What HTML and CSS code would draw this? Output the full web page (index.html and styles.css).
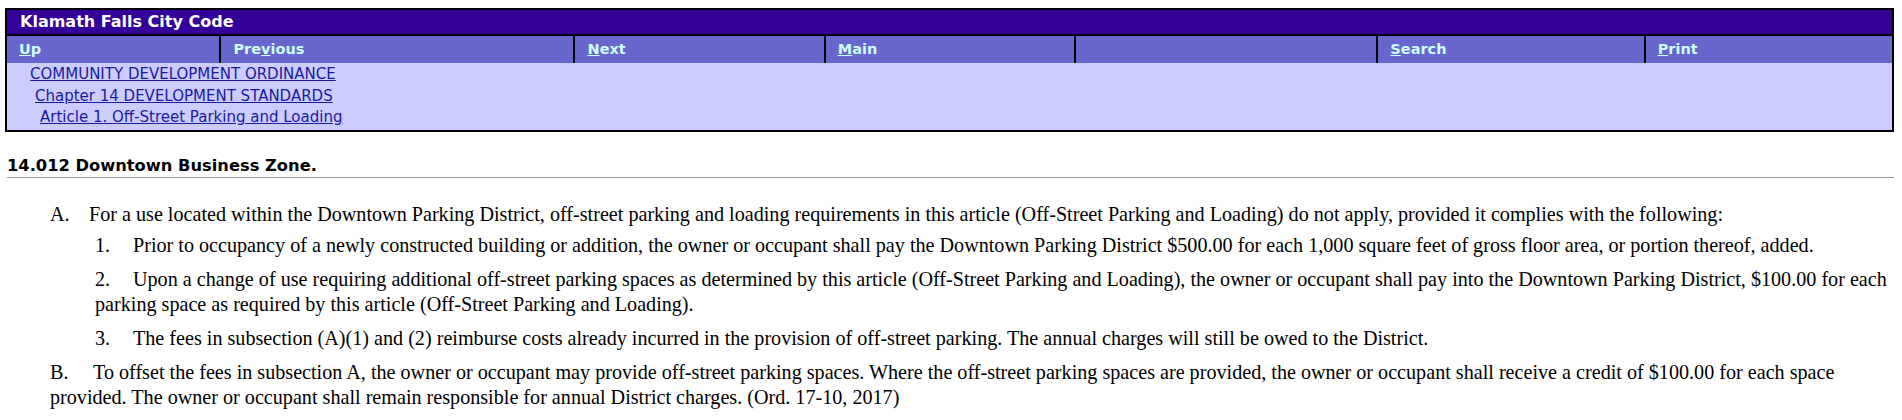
FILE: index.html
```html
<!DOCTYPE html>
<html lang="en">
<head>
<meta charset="utf-8">
<title>Klamath Falls City Code</title>
<link rel="stylesheet" href="styles.css">
</head>
<body>
<div class="page">
  <div class="codebox">
    <div class="title">Klamath Falls City Code</div>
    <div class="navrow">
      <div class="cell"><a href="#"><u>U</u>p</a></div>
      <div class="cell"><a href="#">Pre<u>v</u>ious</a></div>
      <div class="cell"><a href="#"><u>N</u>ext</a></div>
      <div class="cell"><a href="#"><u>M</u>ain</a></div>
      <div class="cell"></div>
      <div class="cell"><a href="#"><u>S</u>earch</a></div>
      <div class="cell"><a href="#"><u>P</u>rint</a></div>
    </div>
    <div class="crumbs">
      <a href="#" class="crumb c1">COMMUNITY DEVELOPMENT ORDINANCE</a>
      <a href="#" class="crumb c2">Chapter 14 DEVELOPMENT STANDARDS</a>
      <a href="#" class="crumb c3">Article 1. Off-Street Parking and Loading</a>
    </div>
  </div>

  <h1 class="sect">14.012 Downtown Business Zone.</h1>

  <div class="content">
    <p class="item top first"><span class="lbl">A.</span>For a use located within the Downtown Parking District, off-street parking and loading requirements in this article (Off-Street Parking and Loading) do not apply, provided it complies with the following:</p>
    <p class="item sub"><span class="lbl">1.</span>Prior to occupancy of a newly constructed building or addition, the owner or occupant shall pay the Downtown Parking District $500.00 for each 1,000 square feet of gross floor area, or portion thereof, added.</p>
    <p class="item sub"><span class="lbl">2.</span>Upon a change of use requiring additional off-street parking spaces as determined by this article (Off-Street Parking and Loading), the owner or occupant shall pay into the Downtown Parking District, $100.00 for each parking space as required by this article (Off-Street Parking and Loading).</p>
    <p class="item sub"><span class="lbl">3.</span>The fees in subsection (A)(1) and (2) reimburse costs already incurred in the provision of off-street parking. The annual charges will still be owed to the District.</p>
    <p class="item top"><span class="lbl wide">B.</span>To offset the fees in subsection A, the owner or occupant may provide off-street parking spaces. Where the off-street parking spaces are provided, the owner or occupant shall receive a credit of $100.00 for each space provided. The owner or occupant shall remain responsible for annual District charges. (Ord. 17-10, 2017)</p>
  </div>
</div>
</body>
</html>
```

FILE: styles.css
```css
html, body {
  margin: 0;
  padding: 0;
  background: #ffffff;
}

.page {
  padding: 8px 8px 0 5px;
}

.codebox {
  display: flex;
  flex-direction: column;
  gap: 2px;
  background: #000000;
  border: 2px solid #000000;
  font-family: "DejaVu Sans", sans-serif;
}

.title {
  background: #330099;
  color: #ffffff;
  font-weight: bold;
  font-size: 16px;
  height: 24px;
  line-height: 24px;
  padding-left: 13px;
}

.navrow {
  display: grid;
  grid-template-columns: 213fr 353fr 249fr 249fr 301fr 266fr 247fr;
  gap: 2px;
  height: 25px;
}

.cell {
  background: #6666cc;
  padding-left: 12px;
  line-height: 27px;
  font-size: 14.5px;
  font-weight: bold;
}

.cell a {
  color: #ccffff;
  text-decoration: none;
}

.cell u {
  text-decoration: underline;
}

.crumbs {
  background: #ccccff;
  display: flex;
  flex-direction: column;
  align-items: flex-start;
  padding: 1px 0 2px 0;
  height: 64px;
}

.crumb {
  color: #1a1aa0;
  font-size: 15px;
  line-height: 21.5px;
}

.c1 { margin-left: 23px; }
.c2 { margin-left: 28px; }
.c3 { margin-left: 33px; }

.sect {
  margin: 24px 0 0 2px;
  padding-bottom: 1px;
  border-bottom: 1px solid #9999aa;
  font-family: "DejaVu Sans", sans-serif;
  font-size: 16.3px;
  font-weight: bold;
  line-height: 20px;
  color: #000000;
}

.content {
  padding-top: 24px;
  font-family: "Liberation Serif", "Times New Roman", serif;
  font-size: 20.15px;
  line-height: 25px;
  color: #000000;
}

.item {
  margin: 0 0 9px 0;
}

.item.first {
  margin-bottom: 6px;
}

.top {
  margin-left: 45px;
}

.sub {
  margin-left: 90px;
}

.lbl {
  display: inline-block;
  width: 39px;
}

.lbl.wide {
  width: 43px;
}

.sub .lbl {
  width: 38px;
}
```
